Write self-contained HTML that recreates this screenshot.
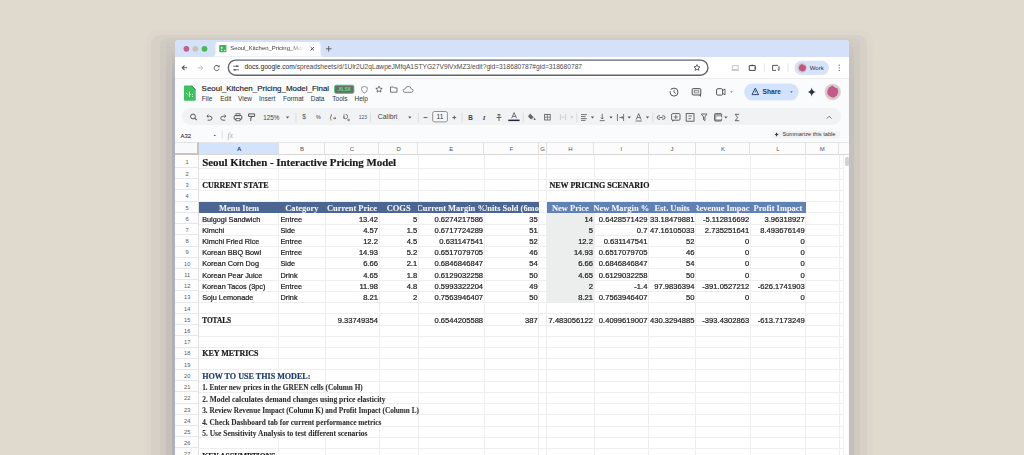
<!DOCTYPE html><html><head><meta charset="utf-8"><style>
*{margin:0;padding:0;box-sizing:border-box}
html,body{width:1024px;height:455px;overflow:hidden;background:#e0d9ce;font-family:"Liberation Sans",sans-serif}
.a{position:absolute}
.t{position:absolute;white-space:nowrap;line-height:1}
.win{position:absolute;left:174.5px;top:40px;width:674.5px;height:430px;background:#f9fbfd;border-radius:4px 4px 0 0;;overflow:hidden}
.c{position:absolute;overflow:hidden;white-space:nowrap;line-height:1}
svg.ov{position:absolute;left:0;top:0}
</style></head><body>
<div class="a" style="left:146px;top:28.6px;width:727.3px;height:440px;background:#dcd6cc;border-radius:14px;-webkit-mask-image:linear-gradient(180deg,rgba(0,0,0,.6) 0,#000 30px)"></div>
<div class="a" style="left:150.6px;top:34.5px;width:716.1px;height:440px;background:#d6d0c7;border-radius:9px"></div>
<div class="a" style="left:159.8px;top:38.3px;width:699.9px;height:440px;background:#cfcac1;border-radius:6px;-webkit-mask-image:linear-gradient(180deg,rgba(0,0,0,.55) 0,rgba(0,0,0,.8) 10px,#000 30px)"></div>
<div class="a" style="left:166.4px;top:40px;width:687.6px;height:440px;background:#c5c0b9;border-radius:4px;-webkit-mask-image:linear-gradient(180deg,rgba(0,0,0,0) 0,rgba(0,0,0,.5) 12px,#000 40px)"></div>
<div class="a" style="left:171.7px;top:52px;width:3px;height:410px;background:#adb1bc;-webkit-mask-image:linear-gradient(180deg,rgba(0,0,0,0) 0,#000 30px)"></div>
<div class="win" style="filter:blur(0.3px)"><div class="a" style="left:0.00px;top:0.00px;width:674.00px;height:16.50px;background:#d5e1f8"></div><svg class="ov" width="1024" height="455" viewBox="0 0 1024 455" style="left:-174.5px;top:-40px"><circle cx="186.4" cy="48.8" r="2.9" fill="#c4608c"/><circle cx="195.4" cy="48.8" r="2.9" fill="#c9c3bd"/><circle cx="204.5" cy="48.8" r="2.9" fill="#47bb58"/><path d="M212.5 56.6 Q215.5 56.6 215.5 53.6 L215.5 45 Q215.5 42 218.5 42 L317.5 42 Q320.5 42 320.5 45 L320.5 53.6 Q320.5 56.6 323.5 56.6 Z" fill="#fff"/><rect x="219.2" y="45" width="7.2" height="7.3" rx="0.8" fill="#3cb55a"/><rect x="221" y="47" width="1.6" height="1.6" fill="#e9f5ec"/><rect x="221" y="49.8" width="1.3" height="1.3" fill="#cfe9d5"/><rect x="224" y="49.8" width="1.3" height="1.3" fill="#cfe9d5"/></svg><div class="t" style="left:55.70px;top:6.10px;font-size:5.95px;color:#3a3a3a;width:74px;overflow:hidden;-webkit-mask-image:linear-gradient(90deg,#000 82%,transparent)">Seoul_Kitchen_Pricing_Model_Final</div><svg class="ov" width="1024" height="455" viewBox="0 0 1024 455" style="left:-174.5px;top:-40px"><path d="M310.6 47 L314 50.4 M314 47 L310.6 50.4" stroke="#555" stroke-width="1"/><path d="M328.7 46 V51.6 M325.9 48.8 H331.5" stroke="#555" stroke-width="0.9"/></svg><div class="a" style="left:0.00px;top:16.50px;width:674.00px;height:22.00px;background:#fff"></div><svg class="ov" width="1024" height="455" viewBox="0 0 1024 455" style="left:-174.5px;top:-40px"><path d="M187.2 67.8 H182.2 M184.5 65.5 L182.2 67.8 L184.5 70.1" stroke="#5a5a5a" stroke-width="1.1" fill="none"/><path d="M197.8 67.8 H202.8 M200.5 65.5 L202.8 67.8 L200.5 70.1" stroke="#c0c0c0" stroke-width="1.0" fill="none"/><path d="M218.9 66.6 A2.6 2.6 0 1 0 219.2 68.9" stroke="#5a5a5a" stroke-width="1.0" fill="none"/><path d="M219.6 64.9 V67.3 H217.2 Z" fill="#5a5a5a"/><rect x="228.25" y="60.05" width="479.7" height="15.2" rx="7.6" fill="#fff" stroke="#5f646c" stroke-width="1.35"/><path d="M233 66.2 H239 M233 69.8 H239" stroke="#555" stroke-width="0.8"/><circle cx="236.9" cy="66.2" r="0.9" fill="#555"/><circle cx="234.9" cy="69.8" r="0.9" fill="#555"/></svg><div class="t" style="left:70.10px;top:24.40px;font-size:6.65px;color:#4a4a4a"><span style='color:#262626'>docs.google.com</span>/spreadsheets/d/1Ulr2U2qLawpeJMfqA1STYG27V9lVxMZ3/edit?gid=318680787#gid=318680787</div><svg class="ov" width="1024" height="455" viewBox="0 0 1024 455" style="left:-174.5px;top:-40px"><path d="M697 64.6 L697.9 66.6 L700 66.8 L698.4 68.2 L698.9 70.4 L697 69.2 L695.1 70.4 L695.6 68.2 L694 66.8 L696.1 66.6 Z" fill="none" stroke="#444" stroke-width="0.8" stroke-linejoin="round"/><path d="M732.4 65.6 H738.2 V69.6 H732.4 Z M731.4 70.4 H739.2" fill="none" stroke="#b8b8b8" stroke-width="0.8"/><path d="M749.3 65.6 H755.2 V70.4 H749.3 Z" fill="none" stroke="#444" stroke-width="1"/><circle cx="752.2" cy="65.3" r="0.8" fill="#444"/><circle cx="755.4" cy="68" r="0.8" fill="#444"/><path d="M764.2 63.2 V72.2 M788 63.2 V72.2" stroke="#dcdcdc" stroke-width="0.7"/><path d="M772.6 65.4 H778 M772.6 65.4 V70.4 H776 M779 66.2 V70.4 L777.8 69.4" fill="none" stroke="#444" stroke-width="0.9"/><rect x="794.4" y="60.7" width="34.6" height="14.3" rx="7.15" fill="#d6e3f8"/><circle cx="802.2" cy="67.85" r="4.7" fill="#cfc4ba"/><path d="M802 64 L803.4 65 L805.6 66 L806 68 L805.2 70.2 L803 71.6 L801 71 L799.2 69.6 L798.8 67.4 L800 65.2 Z" fill="#c05585"/></svg><div class="t" style="left:635.30px;top:24.50px;font-size:6px;color:#333">Work</div><svg class="ov" width="1024" height="455" viewBox="0 0 1024 455" style="left:-174.5px;top:-40px"><circle cx="839.2" cy="65.2" r="0.65" fill="#555"/><circle cx="839.2" cy="67.8" r="0.65" fill="#555"/><circle cx="839.2" cy="70.4" r="0.65" fill="#555"/></svg><div class="a" style="left:0.00px;top:38.00px;width:674.00px;height:0.60px;background:#ececec"></div><svg class="ov" width="1024" height="455" viewBox="0 0 1024 455" style="left:-174.5px;top:-40px"><path d="M184 86.4 Q184 85.6 184.8 85.6 L191.8 85.6 L195.7 89.5 L195.7 100 Q195.7 100.8 194.9 100.8 L184.8 100.8 Q184 100.8 184 100 Z" fill="#3fbf5e"/><path d="M191.6 85.8 L195.5 89.7" stroke="#2e6b55" stroke-width="0.8"/><path d="M186.2 93.2 L187.6 94.6 M189.4 91.6 V97 M189.6 94.4 H190.8" stroke="#eaf7ee" stroke-width="0.8" fill="none"/><circle cx="192.6" cy="94.2" r="0.55" fill="#eaf7ee"/><circle cx="192.6" cy="96.4" r="0.55" fill="#eaf7ee"/></svg><div class="t" style="left:27.10px;top:44.70px;font-size:7.95px;color:#1a1a1a;-webkit-text-stroke:0.15px #1a1a1a">Seoul_Kitchen_Pricing_Model_Final</div><svg class="ov" width="1024" height="455" viewBox="0 0 1024 455" style="left:-174.5px;top:-40px"><rect x="334.6" y="85.2" width="19.3" height="8.1" rx="1.5" fill="#6b6b6b" stroke="#49c268" stroke-width="0.9"/></svg><div class="t" style="left:162.80px;top:46.60px;font-size:5px;color:#5ee07e;font-weight:bold;letter-spacing:-0.2px">.XLSX</div><svg class="ov" width="1024" height="455" viewBox="0 0 1024 455" style="left:-174.5px;top:-40px"><path d="M364.4 86.4 L367.2 87.4 V89.6 Q367.2 92 364.4 93 Q361.6 92 361.6 89.6 V87.4 Z" fill="none" stroke="#777" stroke-width="0.8"/><path d="M379 86.1 L380 88.2 L382.2 88.4 L380.5 89.9 L381 92.1 L379 90.9 L377 92.1 L377.5 89.9 L375.8 88.4 L378 88.2 Z" fill="none" stroke="#555" stroke-width="0.8" stroke-linejoin="round"/><path d="M390.5 87 H393.5 L394.4 87.9 H397 V92.2 H390.5 Z" fill="none" stroke="#555" stroke-width="0.8"/><path d="M404.5 92.3 H411.5 Q413 92.3 413 90.6 Q413 89 411.3 88.9 Q410.7 86.4 408.2 86.4 Q405.8 86.4 405.2 88.8 Q403.3 89 403.3 90.6 Q403.3 92.3 404.5 92.3 Z" fill="none" stroke="#666" stroke-width="0.8"/></svg><div class="t" style="left:27.30px;top:56.10px;font-size:6.5px;color:#333">File</div><div class="t" style="left:45.70px;top:56.10px;font-size:6.5px;color:#333">Edit</div><div class="t" style="left:63.50px;top:56.10px;font-size:6.5px;color:#333">View</div><div class="t" style="left:84.50px;top:56.10px;font-size:6.5px;color:#333">Insert</div><div class="t" style="left:108.50px;top:56.10px;font-size:6.5px;color:#333">Format</div><div class="t" style="left:136.20px;top:56.10px;font-size:6.5px;color:#333">Data</div><div class="t" style="left:157.80px;top:56.10px;font-size:6.5px;color:#333">Tools</div><div class="t" style="left:180.00px;top:56.10px;font-size:6.5px;color:#333">Help</div><svg class="ov" width="1024" height="455" viewBox="0 0 1024 455" style="left:-174.5px;top:-40px"><circle cx="674" cy="92.1" r="4" fill="none" stroke="#555" stroke-width="1"/><path d="M674 89.8 V92.3 L675.8 93.5" fill="none" stroke="#555" stroke-width="0.9"/><path d="M669.4 89.2 L670.2 91.6 L672 90" fill="#fff" stroke="none"/><rect x="692.2" y="88.6" width="8.6" height="6.4" rx="1" fill="#e4e4e4" stroke="#555" stroke-width="1"/><path d="M699 95 L701 97 V94" fill="#555"/><rect x="694.6" y="90.6" width="3.8" height="2.2" fill="none" stroke="#777" stroke-width="0.6"/><rect x="716.6" y="88.7" width="6" height="6.4" rx="1.2" fill="none" stroke="#555" stroke-width="1"/><path d="M722.6 90.5 L725 89 V94.8 L722.6 93.3" fill="none" stroke="#555" stroke-width="0.9"/><path d="M730.2 91.4 H732.8 L731.5 92.8 Z" fill="#555"/><rect x="744.1" y="83.4" width="54.6" height="17.2" rx="8.6" fill="#d3e3fd"/><path d="M755.3 88.1 L758.6 94.6 H752 Z" fill="none" stroke="#324a72" stroke-width="1"/><path d="M755.3 90.4 V92.6" stroke="#324a72" stroke-width="0.8"/></svg><div class="t" style="left:588.10px;top:48.70px;font-size:6.6px;color:#23395e;font-weight:bold">Share</div><svg class="ov" width="1024" height="455" viewBox="0 0 1024 455" style="left:-174.5px;top:-40px"><path d="M790.2 91.4 H792.8 L791.5 92.8 Z" fill="#333"/><path d="M811.7 87.6 Q812.3 91.4 815.8 92.1 Q812.3 92.8 811.7 96.6 Q811.1 92.8 807.6 92.1 Q811.1 91.4 811.7 87.6 Z" fill="#2a3246"/><circle cx="832.7" cy="92.1" r="8.1" fill="#d6cdc4"/><path d="M832.4 85.6 L834.6 87.2 L837.6 88.6 L838.2 92 L837 95.6 L833.6 97.8 L830.4 96.8 L827.6 94.6 L827.2 91 L829 87.6 Z" fill="#c25a8b"/></svg><div class="a" style="left:7.10px;top:68.00px;width:659.40px;height:17.20px;background:#f0f2f3;border-radius:8.6px"></div><svg class="ov" width="1024" height="455" viewBox="0 0 1024 455" style="left:-174.5px;top:-40px"><circle cx="193" cy="116.5" r="2.4" fill="none" stroke="#555" stroke-width="1"/><path d="M194.7 118.2 L196.8 120.2" stroke="#555" stroke-width="1.1"/><path d="M207 116.2 H209.8 Q212 116.2 212 118.2 Q212 120.2 209.8 120.2 H207.6 M208.4 114.8 L206.9 116.2 L208.4 117.6" fill="none" stroke="#555" stroke-width="0.9"/><path d="M225.8 116.2 H223 Q220.8 116.2 220.8 118.2 Q220.8 120.2 223 120.2 H225.2 M224.4 114.8 L225.9 116.2 L224.4 117.6" fill="none" stroke="#555" stroke-width="0.9"/><rect x="234.2" y="115.6" width="7.6" height="3.8" rx="0.8" fill="none" stroke="#555" stroke-width="1"/><rect x="236" y="113.7" width="4" height="2" fill="none" stroke="#555" stroke-width="0.8"/><rect x="236" y="118.4" width="4" height="2.4" fill="#fff" stroke="#555" stroke-width="0.8"/><path d="M248.6 113.9 H254.6 V116.4 H248.6 Z M251.6 116.4 V117.6 H250.8 V121" fill="none" stroke="#555" stroke-width="1"/></svg><div class="t" style="left:88.70px;top:74.60px;font-size:6.3px;color:#444">125%</div><svg class="ov" width="1024" height="455" viewBox="0 0 1024 455" style="left:-174.5px;top:-40px"><path d="M285.90000000000003 116.6 H289.3 L287.6 118.4 Z" fill="#555"/><path d="M296 112.8 V122.2" stroke="#d4d6da" stroke-width="0.7"/></svg><div class="t" style="left:127.70px;top:74.40px;font-size:6.6px;color:#555">$</div><div class="t" style="left:141.60px;top:75.10px;font-size:5.4px;color:#444">%</div><svg class="ov" width="1024" height="455" viewBox="0 0 1024 455" style="left:-174.5px;top:-40px"><path d="M331.6 114.3 L330.2 118.8 M333.2 118.2 H335.8 M334.6 117.2 L335.8 118.2 L334.6 119.2" fill="none" stroke="#555" stroke-width="0.8"/><circle cx="331" cy="119.8" r="0.6" fill="#555"/><path d="M344 114.3 V118.8 M345.6 114.3 Q347.6 114.3 347.6 116.5 Q347.6 118.8 345.6 118.8 Q343.6 118.8 343.6 116.5 M347 120 H349.6 M348.4 119 L349.6 120 L348.4 121" fill="none" stroke="#555" stroke-width="0.7"/></svg><div class="t" style="left:184.30px;top:75.40px;font-size:5px;color:#555">123</div><svg class="ov" width="1024" height="455" viewBox="0 0 1024 455" style="left:-174.5px;top:-40px"><path d="M370.4 112.8 V122.2" stroke="#d4d6da" stroke-width="0.7"/></svg><div class="t" style="left:203.30px;top:74.20px;font-size:6.9px;color:#444">Calibri</div><svg class="ov" width="1024" height="455" viewBox="0 0 1024 455" style="left:-174.5px;top:-40px"><path d="M408.1 116.6 H411.5 L409.8 118.4 Z" fill="#555"/><path d="M418.4 112.8 V122.2" stroke="#d4d6da" stroke-width="0.7"/><path d="M423.6 117.5 H427.4" stroke="#555" stroke-width="0.9"/><rect x="432.7" y="111.5" width="14.7" height="10.4" rx="1.8" fill="#f6f7f9" stroke="#777" stroke-width="0.8"/></svg><div class="t" style="left:265.50px;top:73.90px;transform:translateX(-50%);font-size:6.6px;color:#333">11</div><svg class="ov" width="1024" height="455" viewBox="0 0 1024 455" style="left:-174.5px;top:-40px"><path d="M452.4 117.5 H456.2 M454.3 115.6 V119.4" stroke="#555" stroke-width="0.9"/><path d="M462 112.8 V122.2" stroke="#d4d6da" stroke-width="0.7"/></svg><div class="t" style="left:293.80px;top:74.60px;font-size:6.4px;color:#444;font-weight:bold">B</div><div class="t" style="left:308.20px;top:74.60px;font-family:'Liberation Serif',serif;font-size:7px;color:#444;font-weight:bold"><i>I</i></div><svg class="ov" width="1024" height="455" viewBox="0 0 1024 455" style="left:-174.5px;top:-40px"><path d="M499 114 V121 M496.6 117.5 H501.4 M497.2 115 Q499 113.6 500.6 115" fill="none" stroke="#555" stroke-width="0.9"/><path d="M511.7 118.2 L514.1 112.6 L516.5 118.2 M512.6 116.4 H515.6" fill="none" stroke="#555" stroke-width="0.8"/><rect x="508.3" y="119.6" width="11.3" height="1.5" fill="#1e2a3c"/><path d="M523.3 112.8 V122.2" stroke="#d4d6da" stroke-width="0.7"/><path d="M530 113.4 L533.8 117.2 L531.2 119.4 L528 116.4 Z" fill="#666"/><circle cx="534.6" cy="119.2" r="0.9" fill="#555"/><rect x="544.6" y="114.4" width="5.6" height="5.6" fill="none" stroke="#666" stroke-width="0.9"/><path d="M547.4 114.4 V120 M544.6 117.2 H550.2" stroke="#666" stroke-width="0.7"/><path d="M560.4 114.4 V120 M565.6 114.4 V120 M561.8 117.2 H564.4" fill="none" stroke="#c8c8c8" stroke-width="0.9"/><path d="M570.0999999999999 116.6 H573.5 L571.8 118.4 Z" fill="#c5c5c5"/><path d="M576.7 112.8 V122.2" stroke="#d4d6da" stroke-width="0.7"/><path d="M581 114.6 H586.8 M581 116.6 H585.6 M581 118.6 H586.8 M581 120.4 H585.6" stroke="#555" stroke-width="0.8"/><path d="M590.8 116.6 H594.2 L592.5 118.4 Z" fill="#555"/><path d="M599.8 120.6 H604.6 M602.2 113.8 V119 M600.8 117.6 L602.2 119 L603.6 117.6" fill="none" stroke="#555" stroke-width="0.8"/><path d="M609.3 116.6 H612.7 L611 118.4 Z" fill="#555"/><path d="M617.4 114 V121 M619.4 117.5 H623 M621.8 116.2 L623 117.5 L621.8 118.8 M623.6 114 V121" fill="none" stroke="#555" stroke-width="0.8"/><path d="M627.5 116.6 H630.9000000000001 L629.2 118.4 Z" fill="#555"/><path d="M636.2 119.6 L638.7 113.6 L641.2 119.6 M637.1 117.6 H640.3 M635.6 121 H641.8" fill="none" stroke="#555" stroke-width="0.8"/><path d="M645.8 116.6 H649.2 L647.5 118.4 Z" fill="#555"/><path d="M652.8 112.8 V122.2" stroke="#d4d6da" stroke-width="0.7"/><path d="M660 115.8 H658.8 Q657.2 115.8 657.2 117.5 Q657.2 119.2 658.8 119.2 H660 M662.2 115.8 H663.4 Q665 115.8 665 117.5 Q665 119.2 663.4 119.2 H662.2 M659.4 117.5 H662.8" fill="none" stroke="#555" stroke-width="0.9"/><rect x="671.6" y="113.6" width="8.4" height="6.6" rx="1" fill="none" stroke="#555" stroke-width="0.9"/><path d="M675.8 115 V119 M673.8 117 H677.8" stroke="#555" stroke-width="0.8"/><path d="M672.4 120 L672.4 121.8 L674.4 120" fill="#555"/><rect x="686.2" y="113.6" width="7.8" height="7.6" fill="none" stroke="#555" stroke-width="0.9"/><path d="M688.4 116 H692 M688.4 118.6 H691" stroke="#555" stroke-width="0.8"/><path d="M701.4 114 H707 L704.9 117 V120.6 L703.5 119.6 V117 Z" fill="none" stroke="#555" stroke-width="0.9"/><rect x="714.6" y="113.6" width="7" height="7.4" rx="0.8" fill="#aaa" stroke="#555" stroke-width="0.9"/><rect x="716.4" y="116.6" width="5.2" height="2.6" fill="#fff"/><path d="M724.1999999999999 116.6 H727.6 L725.9 118.4 Z" fill="#555"/><path d="M739.2 114.3 H735.2 L737.6 117.5 L735.2 120.7 H739.2" fill="none" stroke="#555" stroke-width="0.9"/><path d="M826.8 118.6 L829.2 116.2 L831.6 118.6" fill="none" stroke="#666" stroke-width="0.9"/></svg><div class="t" style="left:6.10px;top:93.60px;font-size:5.9px;color:#333;-webkit-text-stroke:0.1px #333">A32</div><svg class="ov" width="1024" height="455" viewBox="0 0 1024 455" style="left:-174.5px;top:-40px"><path d="M213.5 134.9 H216.1 L214.8 136.3 Z" fill="#555"/><path d="M222.3 130.2 V139" stroke="#dadce0" stroke-width="0.7"/></svg><div class="t" style="left:53.10px;top:92.20px;font-family:'Liberation Serif',serif;font-size:7.4px;color:#a8a8a8"><i>fx</i></div><svg class="ov" width="1024" height="455" viewBox="0 0 1024 455" style="left:-174.5px;top:-40px"><rect x="771.4" y="130.4" width="68.6" height="8.2" rx="4" fill="#f1f3f6"/><path d="M776.6 132.2 Q776.9 134.2 778.6 134.5 Q776.9 134.8 776.6 136.8 Q776.3 134.8 774.6 134.5 Q776.3 134.2 776.6 132.2 Z" fill="#333"/></svg><div class="t" style="left:607.90px;top:92.30px;font-size:5.7px;color:#333">Summarize this table</div><div class="a" style="left:0.50px;top:101.60px;width:24.40px;height:13.20px;background:#f8f9fa;border-top:1px solid #e3e3e3;border-right:2px solid #c9c5be;border-bottom:2.2px solid #c9c5be"></div><div class="a" style="left:24.90px;top:101.60px;width:79.40px;height:13.20px;background:#d3e3fd;border-top:1px solid #e6e6e6;border-right:1px solid #e0e0e0;border-bottom:1px solid #d8d8d8"></div><div class="t" style="left:64.60px;top:106.20px;transform:translateX(-50%);font-size:6px;color:#1f3a6b;font-weight:bold">A</div><div class="a" style="left:104.30px;top:101.60px;width:46.20px;height:13.20px;background:#fcfcfd;border-top:1px solid #e6e6e6;border-right:1px solid #e0e0e0;border-bottom:1px solid #d8d8d8"></div><div class="t" style="left:127.40px;top:106.20px;transform:translateX(-50%);font-size:6px;color:#555">B</div><div class="a" style="left:150.50px;top:101.60px;width:54.00px;height:13.20px;background:#fcfcfd;border-top:1px solid #e6e6e6;border-right:1px solid #e0e0e0;border-bottom:1px solid #d8d8d8"></div><div class="t" style="left:177.50px;top:106.20px;transform:translateX(-50%);font-size:6px;color:#555">C</div><div class="a" style="left:204.50px;top:101.60px;width:39.30px;height:13.20px;background:#fcfcfd;border-top:1px solid #e6e6e6;border-right:1px solid #e0e0e0;border-bottom:1px solid #d8d8d8"></div><div class="t" style="left:224.15px;top:106.20px;transform:translateX(-50%);font-size:6px;color:#555">D</div><div class="a" style="left:243.80px;top:101.60px;width:65.90px;height:13.20px;background:#fcfcfd;border-top:1px solid #e6e6e6;border-right:1px solid #e0e0e0;border-bottom:1px solid #d8d8d8"></div><div class="t" style="left:276.75px;top:106.20px;transform:translateX(-50%);font-size:6px;color:#555">E</div><div class="a" style="left:309.70px;top:101.60px;width:54.50px;height:13.20px;background:#fcfcfd;border-top:1px solid #e6e6e6;border-right:1px solid #e0e0e0;border-bottom:1px solid #d8d8d8"></div><div class="t" style="left:336.95px;top:106.20px;transform:translateX(-50%);font-size:6px;color:#555">F</div><div class="a" style="left:364.20px;top:101.60px;width:8.00px;height:13.20px;background:#fcfcfd;border-top:1px solid #e6e6e6;border-right:1px solid #e0e0e0;border-bottom:1px solid #d8d8d8"></div><div class="t" style="left:368.20px;top:106.20px;transform:translateX(-50%);font-size:6px;color:#555">G</div><div class="a" style="left:372.20px;top:101.60px;width:47.30px;height:13.20px;background:#fcfcfd;border-top:1px solid #e6e6e6;border-right:1px solid #e0e0e0;border-bottom:1px solid #d8d8d8"></div><div class="t" style="left:395.85px;top:106.20px;transform:translateX(-50%);font-size:6px;color:#555">H</div><div class="a" style="left:419.50px;top:101.60px;width:54.50px;height:13.20px;background:#fcfcfd;border-top:1px solid #e6e6e6;border-right:1px solid #e0e0e0;border-bottom:1px solid #d8d8d8"></div><div class="t" style="left:446.75px;top:106.20px;transform:translateX(-50%);font-size:6px;color:#555">I</div><div class="a" style="left:474.00px;top:101.60px;width:47.00px;height:13.20px;background:#fcfcfd;border-top:1px solid #e6e6e6;border-right:1px solid #e0e0e0;border-bottom:1px solid #d8d8d8"></div><div class="t" style="left:497.50px;top:106.20px;transform:translateX(-50%);font-size:6px;color:#555">J</div><div class="a" style="left:521.00px;top:101.60px;width:54.80px;height:13.20px;background:#fcfcfd;border-top:1px solid #e6e6e6;border-right:1px solid #e0e0e0;border-bottom:1px solid #d8d8d8"></div><div class="t" style="left:548.40px;top:106.20px;transform:translateX(-50%);font-size:6px;color:#555">K</div><div class="a" style="left:575.80px;top:101.60px;width:55.40px;height:13.20px;background:#fcfcfd;border-top:1px solid #e6e6e6;border-right:1px solid #e0e0e0;border-bottom:1px solid #d8d8d8"></div><div class="t" style="left:603.50px;top:106.20px;transform:translateX(-50%);font-size:6px;color:#555">L</div><div class="a" style="left:631.20px;top:101.60px;width:33.30px;height:13.20px;background:#fcfcfd;border-top:1px solid #e6e6e6;border-right:1px solid #e0e0e0;border-bottom:1px solid #d8d8d8"></div><div class="t" style="left:647.85px;top:106.20px;transform:translateX(-50%);font-size:6px;color:#555">M</div><div class="a" style="left:664.50px;top:101.60px;width:21.00px;height:13.20px;background:#fcfcfd;border-top:1px solid #e6e6e6;border-right:1px solid #e0e0e0;border-bottom:1px solid #d8d8d8"></div><div class="a" style="left:0.50px;top:114.80px;width:24.40px;height:13.20px;background:#fdfdfd;border-right:1px solid #dedfe0;border-bottom:1px solid #e6e7e8"></div><div class="t" style="left:12.70px;top:119.70px;transform:translateX(-50%);font-size:5.7px;color:#5a5a5a">1</div><div class="a" style="left:0.50px;top:128.00px;width:24.40px;height:11.22px;background:#fdfdfd;border-right:1px solid #dedfe0;border-bottom:1px solid #e6e7e8"></div><div class="t" style="left:12.70px;top:131.91px;transform:translateX(-50%);font-size:5.7px;color:#5a5a5a">2</div><div class="a" style="left:0.50px;top:139.22px;width:24.40px;height:11.22px;background:#fdfdfd;border-right:1px solid #dedfe0;border-bottom:1px solid #e6e7e8"></div><div class="t" style="left:12.70px;top:143.13px;transform:translateX(-50%);font-size:5.7px;color:#5a5a5a">3</div><div class="a" style="left:0.50px;top:150.44px;width:24.40px;height:11.22px;background:#fdfdfd;border-right:1px solid #dedfe0;border-bottom:1px solid #e6e7e8"></div><div class="t" style="left:12.70px;top:154.35px;transform:translateX(-50%);font-size:5.7px;color:#5a5a5a">4</div><div class="a" style="left:0.50px;top:161.66px;width:24.40px;height:11.22px;background:#fdfdfd;border-right:1px solid #dedfe0;border-bottom:1px solid #e6e7e8"></div><div class="t" style="left:12.70px;top:165.57px;transform:translateX(-50%);font-size:5.7px;color:#5a5a5a">5</div><div class="a" style="left:0.50px;top:172.88px;width:24.40px;height:11.22px;background:#fdfdfd;border-right:1px solid #dedfe0;border-bottom:1px solid #e6e7e8"></div><div class="t" style="left:12.70px;top:176.79px;transform:translateX(-50%);font-size:5.7px;color:#5a5a5a">6</div><div class="a" style="left:0.50px;top:184.10px;width:24.40px;height:11.22px;background:#fdfdfd;border-right:1px solid #dedfe0;border-bottom:1px solid #e6e7e8"></div><div class="t" style="left:12.70px;top:188.01px;transform:translateX(-50%);font-size:5.7px;color:#5a5a5a">7</div><div class="a" style="left:0.50px;top:195.32px;width:24.40px;height:11.22px;background:#fdfdfd;border-right:1px solid #dedfe0;border-bottom:1px solid #e6e7e8"></div><div class="t" style="left:12.70px;top:199.23px;transform:translateX(-50%);font-size:5.7px;color:#5a5a5a">8</div><div class="a" style="left:0.50px;top:206.54px;width:24.40px;height:11.22px;background:#fdfdfd;border-right:1px solid #dedfe0;border-bottom:1px solid #e6e7e8"></div><div class="t" style="left:12.70px;top:210.45px;transform:translateX(-50%);font-size:5.7px;color:#5a5a5a">9</div><div class="a" style="left:0.50px;top:217.76px;width:24.40px;height:11.22px;background:#fdfdfd;border-right:1px solid #dedfe0;border-bottom:1px solid #e6e7e8"></div><div class="t" style="left:12.70px;top:221.67px;transform:translateX(-50%);font-size:5.7px;color:#5a5a5a">10</div><div class="a" style="left:0.50px;top:228.98px;width:24.40px;height:11.22px;background:#fdfdfd;border-right:1px solid #dedfe0;border-bottom:1px solid #e6e7e8"></div><div class="t" style="left:12.70px;top:232.89px;transform:translateX(-50%);font-size:5.7px;color:#5a5a5a">11</div><div class="a" style="left:0.50px;top:240.20px;width:24.40px;height:11.22px;background:#fdfdfd;border-right:1px solid #dedfe0;border-bottom:1px solid #e6e7e8"></div><div class="t" style="left:12.70px;top:244.11px;transform:translateX(-50%);font-size:5.7px;color:#5a5a5a">12</div><div class="a" style="left:0.50px;top:251.42px;width:24.40px;height:11.22px;background:#fdfdfd;border-right:1px solid #dedfe0;border-bottom:1px solid #e6e7e8"></div><div class="t" style="left:12.70px;top:255.33px;transform:translateX(-50%);font-size:5.7px;color:#5a5a5a">13</div><div class="a" style="left:0.50px;top:262.64px;width:24.40px;height:11.22px;background:#fdfdfd;border-right:1px solid #dedfe0;border-bottom:1px solid #e6e7e8"></div><div class="t" style="left:12.70px;top:266.55px;transform:translateX(-50%);font-size:5.7px;color:#5a5a5a">14</div><div class="a" style="left:0.50px;top:273.86px;width:24.40px;height:11.22px;background:#fdfdfd;border-right:1px solid #dedfe0;border-bottom:1px solid #e6e7e8"></div><div class="t" style="left:12.70px;top:277.77px;transform:translateX(-50%);font-size:5.7px;color:#5a5a5a">15</div><div class="a" style="left:0.50px;top:285.08px;width:24.40px;height:11.22px;background:#fdfdfd;border-right:1px solid #dedfe0;border-bottom:1px solid #e6e7e8"></div><div class="t" style="left:12.70px;top:288.99px;transform:translateX(-50%);font-size:5.7px;color:#5a5a5a">16</div><div class="a" style="left:0.50px;top:296.30px;width:24.40px;height:11.22px;background:#fdfdfd;border-right:1px solid #dedfe0;border-bottom:1px solid #e6e7e8"></div><div class="t" style="left:12.70px;top:300.21px;transform:translateX(-50%);font-size:5.7px;color:#5a5a5a">17</div><div class="a" style="left:0.50px;top:307.52px;width:24.40px;height:11.22px;background:#fdfdfd;border-right:1px solid #dedfe0;border-bottom:1px solid #e6e7e8"></div><div class="t" style="left:12.70px;top:311.43px;transform:translateX(-50%);font-size:5.7px;color:#5a5a5a">18</div><div class="a" style="left:0.50px;top:318.74px;width:24.40px;height:11.22px;background:#fdfdfd;border-right:1px solid #dedfe0;border-bottom:1px solid #e6e7e8"></div><div class="t" style="left:12.70px;top:322.65px;transform:translateX(-50%);font-size:5.7px;color:#5a5a5a">19</div><div class="a" style="left:0.50px;top:329.96px;width:24.40px;height:11.22px;background:#fdfdfd;border-right:1px solid #dedfe0;border-bottom:1px solid #e6e7e8"></div><div class="t" style="left:12.70px;top:333.87px;transform:translateX(-50%);font-size:5.7px;color:#5a5a5a">20</div><div class="a" style="left:0.50px;top:341.18px;width:24.40px;height:11.22px;background:#fdfdfd;border-right:1px solid #dedfe0;border-bottom:1px solid #e6e7e8"></div><div class="t" style="left:12.70px;top:345.09px;transform:translateX(-50%);font-size:5.7px;color:#5a5a5a">21</div><div class="a" style="left:0.50px;top:352.40px;width:24.40px;height:11.22px;background:#fdfdfd;border-right:1px solid #dedfe0;border-bottom:1px solid #e6e7e8"></div><div class="t" style="left:12.70px;top:356.31px;transform:translateX(-50%);font-size:5.7px;color:#5a5a5a">22</div><div class="a" style="left:0.50px;top:363.62px;width:24.40px;height:11.22px;background:#fdfdfd;border-right:1px solid #dedfe0;border-bottom:1px solid #e6e7e8"></div><div class="t" style="left:12.70px;top:367.53px;transform:translateX(-50%);font-size:5.7px;color:#5a5a5a">23</div><div class="a" style="left:0.50px;top:374.84px;width:24.40px;height:11.22px;background:#fdfdfd;border-right:1px solid #dedfe0;border-bottom:1px solid #e6e7e8"></div><div class="t" style="left:12.70px;top:378.75px;transform:translateX(-50%);font-size:5.7px;color:#5a5a5a">24</div><div class="a" style="left:0.50px;top:386.06px;width:24.40px;height:11.22px;background:#fdfdfd;border-right:1px solid #dedfe0;border-bottom:1px solid #e6e7e8"></div><div class="t" style="left:12.70px;top:389.97px;transform:translateX(-50%);font-size:5.7px;color:#5a5a5a">25</div><div class="a" style="left:0.50px;top:397.28px;width:24.40px;height:11.22px;background:#fdfdfd;border-right:1px solid #dedfe0;border-bottom:1px solid #e6e7e8"></div><div class="t" style="left:12.70px;top:401.19px;transform:translateX(-50%);font-size:5.7px;color:#5a5a5a">26</div><div class="a" style="left:0.50px;top:408.50px;width:24.40px;height:11.22px;background:#fdfdfd;border-right:1px solid #dedfe0;border-bottom:1px solid #e6e7e8"></div><div class="t" style="left:12.70px;top:412.41px;transform:translateX(-50%);font-size:5.7px;color:#5a5a5a">27</div><div class="a" style="left:24.90px;top:114.80px;width:649.10px;height:315.20px;background:#fff"></div><div class="a" style="left:24.90px;top:127.50px;width:644.60px;height:1.00px;background:#edeeef"></div><div class="a" style="left:24.90px;top:138.72px;width:644.60px;height:1.00px;background:#edeeef"></div><div class="a" style="left:24.90px;top:149.94px;width:644.60px;height:1.00px;background:#edeeef"></div><div class="a" style="left:24.90px;top:161.16px;width:644.60px;height:1.00px;background:#edeeef"></div><div class="a" style="left:24.90px;top:172.38px;width:644.60px;height:1.00px;background:#edeeef"></div><div class="a" style="left:24.90px;top:183.60px;width:644.60px;height:1.00px;background:#edeeef"></div><div class="a" style="left:24.90px;top:194.82px;width:644.60px;height:1.00px;background:#edeeef"></div><div class="a" style="left:24.90px;top:206.04px;width:644.60px;height:1.00px;background:#edeeef"></div><div class="a" style="left:24.90px;top:217.26px;width:644.60px;height:1.00px;background:#edeeef"></div><div class="a" style="left:24.90px;top:228.48px;width:644.60px;height:1.00px;background:#edeeef"></div><div class="a" style="left:24.90px;top:239.70px;width:644.60px;height:1.00px;background:#edeeef"></div><div class="a" style="left:24.90px;top:250.92px;width:644.60px;height:1.00px;background:#edeeef"></div><div class="a" style="left:24.90px;top:262.14px;width:644.60px;height:1.00px;background:#edeeef"></div><div class="a" style="left:24.90px;top:273.36px;width:644.60px;height:1.00px;background:#edeeef"></div><div class="a" style="left:24.90px;top:284.58px;width:644.60px;height:1.00px;background:#edeeef"></div><div class="a" style="left:24.90px;top:295.80px;width:644.60px;height:1.00px;background:#edeeef"></div><div class="a" style="left:24.90px;top:307.02px;width:644.60px;height:1.00px;background:#edeeef"></div><div class="a" style="left:24.90px;top:318.24px;width:644.60px;height:1.00px;background:#edeeef"></div><div class="a" style="left:24.90px;top:329.46px;width:644.60px;height:1.00px;background:#edeeef"></div><div class="a" style="left:24.90px;top:340.68px;width:644.60px;height:1.00px;background:#edeeef"></div><div class="a" style="left:24.90px;top:351.90px;width:644.60px;height:1.00px;background:#edeeef"></div><div class="a" style="left:24.90px;top:363.12px;width:644.60px;height:1.00px;background:#edeeef"></div><div class="a" style="left:24.90px;top:374.34px;width:644.60px;height:1.00px;background:#edeeef"></div><div class="a" style="left:24.90px;top:385.56px;width:644.60px;height:1.00px;background:#edeeef"></div><div class="a" style="left:24.90px;top:396.78px;width:644.60px;height:1.00px;background:#edeeef"></div><div class="a" style="left:24.90px;top:408.00px;width:644.60px;height:1.00px;background:#edeeef"></div><div class="a" style="left:24.90px;top:419.22px;width:644.60px;height:1.00px;background:#edeeef"></div><div class="a" style="left:24.90px;top:430.44px;width:644.60px;height:1.00px;background:#edeeef"></div><div class="a" style="left:103.80px;top:114.80px;width:1.00px;height:315.20px;background:#edeeef"></div><div class="a" style="left:150.00px;top:114.80px;width:1.00px;height:315.20px;background:#edeeef"></div><div class="a" style="left:204.00px;top:114.80px;width:1.00px;height:315.20px;background:#edeeef"></div><div class="a" style="left:243.30px;top:114.80px;width:1.00px;height:315.20px;background:#edeeef"></div><div class="a" style="left:309.20px;top:114.80px;width:1.00px;height:315.20px;background:#edeeef"></div><div class="a" style="left:363.70px;top:114.80px;width:1.00px;height:315.20px;background:#edeeef"></div><div class="a" style="left:371.70px;top:114.80px;width:1.00px;height:315.20px;background:#edeeef"></div><div class="a" style="left:419.00px;top:114.80px;width:1.00px;height:315.20px;background:#edeeef"></div><div class="a" style="left:473.50px;top:114.80px;width:1.00px;height:315.20px;background:#edeeef"></div><div class="a" style="left:520.50px;top:114.80px;width:1.00px;height:315.20px;background:#edeeef"></div><div class="a" style="left:575.30px;top:114.80px;width:1.00px;height:315.20px;background:#edeeef"></div><div class="a" style="left:630.70px;top:114.80px;width:1.00px;height:315.20px;background:#edeeef"></div><div class="a" style="left:664.00px;top:114.80px;width:1.00px;height:315.20px;background:#edeeef"></div><div class="a" style="left:685.00px;top:114.80px;width:1.00px;height:315.20px;background:#edeeef"></div><div class="a" style="left:668.70px;top:114.80px;width:0.70px;height:315.20px;background:#f0f1f2"></div><div class="a" style="left:670.80px;top:116.80px;width:3.30px;height:9.60px;background:#d0d5dd;border-radius:1.5px"></div><div class="t" style="left:27.70px;top:117.20px;font-family:'Liberation Serif',serif;font-weight:bold;-webkit-text-stroke:0.2px currentColor;font-size:10.9px;color:#1a1a1a">Seoul Kitchen - Interactive Pricing Model</div><div class="t" style="left:27.70px;top:142.33px;font-family:'Liberation Serif',serif;font-weight:bold;-webkit-text-stroke:0.2px currentColor;font-size:8px;color:#1a1a1a">CURRENT STATE</div><div class="t" style="left:375.00px;top:142.33px;font-family:'Liberation Serif',serif;font-weight:bold;-webkit-text-stroke:0.2px currentColor;font-size:8px;color:#1a1a1a">NEW PRICING SCENARIO</div><div class="a" style="left:24.90px;top:161.66px;width:339.30px;height:11.22px;background:#4b6691"></div><div class="a" style="left:372.20px;top:161.66px;width:259.00px;height:11.22px;background:#6081b3"></div><div class="c" style="left:24.90px;top:161.66px;width:79.40px;height:11.22px;text-align:center;font-family:'Liberation Serif',serif;font-weight:bold;-webkit-text-stroke:0.2px currentColor;font-size:8.45px;color:#f4f6fa;-webkit-text-stroke:0.05px #fff;line-height:12.62px"><span style="display:inline-block;margin:0 -20px">Menu Item</span></div><div class="c" style="left:104.30px;top:161.66px;width:46.20px;height:11.22px;text-align:center;font-family:'Liberation Serif',serif;font-weight:bold;-webkit-text-stroke:0.2px currentColor;font-size:8.45px;color:#f4f6fa;-webkit-text-stroke:0.05px #fff;line-height:12.62px"><span style="display:inline-block;margin:0 -20px">Category</span></div><div class="c" style="left:150.50px;top:161.66px;width:54.00px;height:11.22px;text-align:center;font-family:'Liberation Serif',serif;font-weight:bold;-webkit-text-stroke:0.2px currentColor;font-size:8.45px;color:#f4f6fa;-webkit-text-stroke:0.05px #fff;line-height:12.62px"><span style="display:inline-block;margin:0 -20px">Current Price</span></div><div class="c" style="left:204.50px;top:161.66px;width:39.30px;height:11.22px;text-align:center;font-family:'Liberation Serif',serif;font-weight:bold;-webkit-text-stroke:0.2px currentColor;font-size:8.45px;color:#f4f6fa;-webkit-text-stroke:0.05px #fff;line-height:12.62px"><span style="display:inline-block;margin:0 -20px">COGS</span></div><div class="c" style="left:243.80px;top:161.66px;width:65.90px;height:11.22px;text-align:center;font-family:'Liberation Serif',serif;font-weight:bold;-webkit-text-stroke:0.2px currentColor;font-size:8.45px;color:#f4f6fa;-webkit-text-stroke:0.05px #fff;line-height:12.62px"><span style="display:inline-block;margin:0 -20px">Current Margin %</span></div><div class="c" style="left:309.70px;top:161.66px;width:54.50px;height:11.22px;text-align:center;font-family:'Liberation Serif',serif;font-weight:bold;-webkit-text-stroke:0.2px currentColor;font-size:8.45px;color:#f4f6fa;-webkit-text-stroke:0.05px #fff;line-height:12.62px"><span style="display:inline-block;margin:0 -20px">Units Sold (6mo)</span></div><div class="c" style="left:372.20px;top:161.66px;width:47.30px;height:11.22px;text-align:center;font-family:'Liberation Serif',serif;font-weight:bold;-webkit-text-stroke:0.2px currentColor;font-size:8.45px;color:#f4f6fa;-webkit-text-stroke:0.05px #fff;line-height:12.62px"><span style="display:inline-block;margin:0 -20px">New Price</span></div><div class="c" style="left:419.50px;top:161.66px;width:54.50px;height:11.22px;text-align:center;font-family:'Liberation Serif',serif;font-weight:bold;-webkit-text-stroke:0.2px currentColor;font-size:8.45px;color:#f4f6fa;-webkit-text-stroke:0.05px #fff;line-height:12.62px"><span style="display:inline-block;margin:0 -20px">New Margin %</span></div><div class="c" style="left:474.00px;top:161.66px;width:47.00px;height:11.22px;text-align:center;font-family:'Liberation Serif',serif;font-weight:bold;-webkit-text-stroke:0.2px currentColor;font-size:8.45px;color:#f4f6fa;-webkit-text-stroke:0.05px #fff;line-height:12.62px"><span style="display:inline-block;margin:0 -20px">Est. Units</span></div><div class="c" style="left:521.00px;top:161.66px;width:54.80px;height:11.22px;text-align:center;font-family:'Liberation Serif',serif;font-weight:bold;-webkit-text-stroke:0.2px currentColor;font-size:8.45px;color:#f4f6fa;-webkit-text-stroke:0.05px #fff;line-height:12.62px"><span style="display:inline-block;margin:0 -20px">Revenue Impact</span></div><div class="c" style="left:575.80px;top:161.66px;width:55.40px;height:11.22px;text-align:center;font-family:'Liberation Serif',serif;font-weight:bold;-webkit-text-stroke:0.2px currentColor;font-size:8.45px;color:#f4f6fa;-webkit-text-stroke:0.05px #fff;line-height:12.62px"><span style="display:inline-block;margin:0 -20px">Profit Impact</span></div><div class="a" style="left:372.20px;top:172.88px;width:47.30px;height:89.76px;background:#eceeed"></div><div class="t" style="left:27.70px;top:175.59px;font-size:7.3px;color:#222;-webkit-text-stroke:0.22px #222">Bulgogi Sandwich</div><div class="t" style="left:106.00px;top:175.59px;font-size:7.3px;color:#222;-webkit-text-stroke:0.22px #222">Entree</div><div class="t" style="right:471.10px;top:175.59px;font-size:7.6px;color:#222;-webkit-text-stroke:0.22px #222">13.42</div><div class="t" style="right:431.80px;top:175.59px;font-size:7.6px;color:#222;-webkit-text-stroke:0.22px #222">5</div><div class="t" style="right:365.90px;top:175.59px;font-size:7.6px;color:#222;-webkit-text-stroke:0.22px #222">0.6274217586</div><div class="t" style="right:311.40px;top:175.59px;font-size:7.6px;color:#222;-webkit-text-stroke:0.22px #222">35</div><div class="t" style="right:256.10px;top:175.59px;font-size:7.6px;color:#222;-webkit-text-stroke:0.22px #222">14</div><div class="t" style="right:201.60px;top:175.59px;font-size:7.6px;color:#222;-webkit-text-stroke:0.22px #222">0.6428571429</div><div class="t" style="right:154.60px;top:175.59px;font-size:7.6px;color:#222;-webkit-text-stroke:0.22px #222">33.18479881</div><div class="t" style="right:99.80px;top:175.59px;font-size:7.6px;color:#222;-webkit-text-stroke:0.22px #222">-5.112816692</div><div class="t" style="right:44.40px;top:175.59px;font-size:7.6px;color:#222;-webkit-text-stroke:0.22px #222">3.96318927</div><div class="t" style="left:27.70px;top:186.81px;font-size:7.3px;color:#222;-webkit-text-stroke:0.22px #222">Kimchi</div><div class="t" style="left:106.00px;top:186.81px;font-size:7.3px;color:#222;-webkit-text-stroke:0.22px #222">Side</div><div class="t" style="right:471.10px;top:186.81px;font-size:7.6px;color:#222;-webkit-text-stroke:0.22px #222">4.57</div><div class="t" style="right:431.80px;top:186.81px;font-size:7.6px;color:#222;-webkit-text-stroke:0.22px #222">1.5</div><div class="t" style="right:365.90px;top:186.81px;font-size:7.6px;color:#222;-webkit-text-stroke:0.22px #222">0.6717724289</div><div class="t" style="right:311.40px;top:186.81px;font-size:7.6px;color:#222;-webkit-text-stroke:0.22px #222">51</div><div class="t" style="right:256.10px;top:186.81px;font-size:7.6px;color:#222;-webkit-text-stroke:0.22px #222">5</div><div class="t" style="right:201.60px;top:186.81px;font-size:7.6px;color:#222;-webkit-text-stroke:0.22px #222">0.7</div><div class="t" style="right:154.60px;top:186.81px;font-size:7.6px;color:#222;-webkit-text-stroke:0.22px #222">47.16105033</div><div class="t" style="right:99.80px;top:186.81px;font-size:7.6px;color:#222;-webkit-text-stroke:0.22px #222">2.735251641</div><div class="t" style="right:44.40px;top:186.81px;font-size:7.6px;color:#222;-webkit-text-stroke:0.22px #222">8.493676149</div><div class="t" style="left:27.70px;top:198.03px;font-size:7.3px;color:#222;-webkit-text-stroke:0.22px #222">Kimchi Fried Rice</div><div class="t" style="left:106.00px;top:198.03px;font-size:7.3px;color:#222;-webkit-text-stroke:0.22px #222">Entree</div><div class="t" style="right:471.10px;top:198.03px;font-size:7.6px;color:#222;-webkit-text-stroke:0.22px #222">12.2</div><div class="t" style="right:431.80px;top:198.03px;font-size:7.6px;color:#222;-webkit-text-stroke:0.22px #222">4.5</div><div class="t" style="right:365.90px;top:198.03px;font-size:7.6px;color:#222;-webkit-text-stroke:0.22px #222">0.631147541</div><div class="t" style="right:311.40px;top:198.03px;font-size:7.6px;color:#222;-webkit-text-stroke:0.22px #222">52</div><div class="t" style="right:256.10px;top:198.03px;font-size:7.6px;color:#222;-webkit-text-stroke:0.22px #222">12.2</div><div class="t" style="right:201.60px;top:198.03px;font-size:7.6px;color:#222;-webkit-text-stroke:0.22px #222">0.631147541</div><div class="t" style="right:154.60px;top:198.03px;font-size:7.6px;color:#222;-webkit-text-stroke:0.22px #222">52</div><div class="t" style="right:99.80px;top:198.03px;font-size:7.6px;color:#222;-webkit-text-stroke:0.22px #222">0</div><div class="t" style="right:44.40px;top:198.03px;font-size:7.6px;color:#222;-webkit-text-stroke:0.22px #222">0</div><div class="t" style="left:27.70px;top:209.25px;font-size:7.3px;color:#222;-webkit-text-stroke:0.22px #222">Korean BBQ Bowl</div><div class="t" style="left:106.00px;top:209.25px;font-size:7.3px;color:#222;-webkit-text-stroke:0.22px #222">Entree</div><div class="t" style="right:471.10px;top:209.25px;font-size:7.6px;color:#222;-webkit-text-stroke:0.22px #222">14.93</div><div class="t" style="right:431.80px;top:209.25px;font-size:7.6px;color:#222;-webkit-text-stroke:0.22px #222">5.2</div><div class="t" style="right:365.90px;top:209.25px;font-size:7.6px;color:#222;-webkit-text-stroke:0.22px #222">0.6517079705</div><div class="t" style="right:311.40px;top:209.25px;font-size:7.6px;color:#222;-webkit-text-stroke:0.22px #222">46</div><div class="t" style="right:256.10px;top:209.25px;font-size:7.6px;color:#222;-webkit-text-stroke:0.22px #222">14.93</div><div class="t" style="right:201.60px;top:209.25px;font-size:7.6px;color:#222;-webkit-text-stroke:0.22px #222">0.6517079705</div><div class="t" style="right:154.60px;top:209.25px;font-size:7.6px;color:#222;-webkit-text-stroke:0.22px #222">46</div><div class="t" style="right:99.80px;top:209.25px;font-size:7.6px;color:#222;-webkit-text-stroke:0.22px #222">0</div><div class="t" style="right:44.40px;top:209.25px;font-size:7.6px;color:#222;-webkit-text-stroke:0.22px #222">0</div><div class="t" style="left:27.70px;top:220.47px;font-size:7.3px;color:#222;-webkit-text-stroke:0.22px #222">Korean Corn Dog</div><div class="t" style="left:106.00px;top:220.47px;font-size:7.3px;color:#222;-webkit-text-stroke:0.22px #222">Side</div><div class="t" style="right:471.10px;top:220.47px;font-size:7.6px;color:#222;-webkit-text-stroke:0.22px #222">6.66</div><div class="t" style="right:431.80px;top:220.47px;font-size:7.6px;color:#222;-webkit-text-stroke:0.22px #222">2.1</div><div class="t" style="right:365.90px;top:220.47px;font-size:7.6px;color:#222;-webkit-text-stroke:0.22px #222">0.6846846847</div><div class="t" style="right:311.40px;top:220.47px;font-size:7.6px;color:#222;-webkit-text-stroke:0.22px #222">54</div><div class="t" style="right:256.10px;top:220.47px;font-size:7.6px;color:#222;-webkit-text-stroke:0.22px #222">6.66</div><div class="t" style="right:201.60px;top:220.47px;font-size:7.6px;color:#222;-webkit-text-stroke:0.22px #222">0.6846846847</div><div class="t" style="right:154.60px;top:220.47px;font-size:7.6px;color:#222;-webkit-text-stroke:0.22px #222">54</div><div class="t" style="right:99.80px;top:220.47px;font-size:7.6px;color:#222;-webkit-text-stroke:0.22px #222">0</div><div class="t" style="right:44.40px;top:220.47px;font-size:7.6px;color:#222;-webkit-text-stroke:0.22px #222">0</div><div class="t" style="left:27.70px;top:231.69px;font-size:7.3px;color:#222;-webkit-text-stroke:0.22px #222">Korean Pear Juice</div><div class="t" style="left:106.00px;top:231.69px;font-size:7.3px;color:#222;-webkit-text-stroke:0.22px #222">Drink</div><div class="t" style="right:471.10px;top:231.69px;font-size:7.6px;color:#222;-webkit-text-stroke:0.22px #222">4.65</div><div class="t" style="right:431.80px;top:231.69px;font-size:7.6px;color:#222;-webkit-text-stroke:0.22px #222">1.8</div><div class="t" style="right:365.90px;top:231.69px;font-size:7.6px;color:#222;-webkit-text-stroke:0.22px #222">0.6129032258</div><div class="t" style="right:311.40px;top:231.69px;font-size:7.6px;color:#222;-webkit-text-stroke:0.22px #222">50</div><div class="t" style="right:256.10px;top:231.69px;font-size:7.6px;color:#222;-webkit-text-stroke:0.22px #222">4.65</div><div class="t" style="right:201.60px;top:231.69px;font-size:7.6px;color:#222;-webkit-text-stroke:0.22px #222">0.6129032258</div><div class="t" style="right:154.60px;top:231.69px;font-size:7.6px;color:#222;-webkit-text-stroke:0.22px #222">50</div><div class="t" style="right:99.80px;top:231.69px;font-size:7.6px;color:#222;-webkit-text-stroke:0.22px #222">0</div><div class="t" style="right:44.40px;top:231.69px;font-size:7.6px;color:#222;-webkit-text-stroke:0.22px #222">0</div><div class="t" style="left:27.70px;top:242.91px;font-size:7.3px;color:#222;-webkit-text-stroke:0.22px #222">Korean Tacos (3pc)</div><div class="t" style="left:106.00px;top:242.91px;font-size:7.3px;color:#222;-webkit-text-stroke:0.22px #222">Entree</div><div class="t" style="right:471.10px;top:242.91px;font-size:7.6px;color:#222;-webkit-text-stroke:0.22px #222">11.98</div><div class="t" style="right:431.80px;top:242.91px;font-size:7.6px;color:#222;-webkit-text-stroke:0.22px #222">4.8</div><div class="t" style="right:365.90px;top:242.91px;font-size:7.6px;color:#222;-webkit-text-stroke:0.22px #222">0.5993322204</div><div class="t" style="right:311.40px;top:242.91px;font-size:7.6px;color:#222;-webkit-text-stroke:0.22px #222">49</div><div class="t" style="right:256.10px;top:242.91px;font-size:7.6px;color:#222;-webkit-text-stroke:0.22px #222">2</div><div class="t" style="right:201.60px;top:242.91px;font-size:7.6px;color:#222;-webkit-text-stroke:0.22px #222">-1.4</div><div class="t" style="right:154.60px;top:242.91px;font-size:7.6px;color:#222;-webkit-text-stroke:0.22px #222">97.9836394</div><div class="t" style="right:99.80px;top:242.91px;font-size:7.6px;color:#222;-webkit-text-stroke:0.22px #222">-391.0527212</div><div class="t" style="right:44.40px;top:242.91px;font-size:7.6px;color:#222;-webkit-text-stroke:0.22px #222">-626.1741903</div><div class="t" style="left:27.70px;top:254.13px;font-size:7.3px;color:#222;-webkit-text-stroke:0.22px #222">Soju Lemonade</div><div class="t" style="left:106.00px;top:254.13px;font-size:7.3px;color:#222;-webkit-text-stroke:0.22px #222">Drink</div><div class="t" style="right:471.10px;top:254.13px;font-size:7.6px;color:#222;-webkit-text-stroke:0.22px #222">8.21</div><div class="t" style="right:431.80px;top:254.13px;font-size:7.6px;color:#222;-webkit-text-stroke:0.22px #222">2</div><div class="t" style="right:365.90px;top:254.13px;font-size:7.6px;color:#222;-webkit-text-stroke:0.22px #222">0.7563946407</div><div class="t" style="right:311.40px;top:254.13px;font-size:7.6px;color:#222;-webkit-text-stroke:0.22px #222">50</div><div class="t" style="right:256.10px;top:254.13px;font-size:7.6px;color:#222;-webkit-text-stroke:0.22px #222">8.21</div><div class="t" style="right:201.60px;top:254.13px;font-size:7.6px;color:#222;-webkit-text-stroke:0.22px #222">0.7563946407</div><div class="t" style="right:154.60px;top:254.13px;font-size:7.6px;color:#222;-webkit-text-stroke:0.22px #222">50</div><div class="t" style="right:99.80px;top:254.13px;font-size:7.6px;color:#222;-webkit-text-stroke:0.22px #222">0</div><div class="t" style="right:44.40px;top:254.13px;font-size:7.6px;color:#222;-webkit-text-stroke:0.22px #222">0</div><div class="t" style="left:27.70px;top:276.97px;font-family:'Liberation Serif',serif;font-weight:bold;-webkit-text-stroke:0.2px currentColor;font-size:7.3px;color:#1a1a1a">TOTALS</div><div class="t" style="right:471.10px;top:276.57px;font-size:7.6px;color:#222;-webkit-text-stroke:0.22px #222">9.33749354</div><div class="t" style="right:365.90px;top:276.57px;font-size:7.6px;color:#222;-webkit-text-stroke:0.22px #222">0.6544205588</div><div class="t" style="right:311.40px;top:276.57px;font-size:7.6px;color:#222;-webkit-text-stroke:0.22px #222">387</div><div class="t" style="right:256.10px;top:276.57px;font-size:7.6px;color:#222;-webkit-text-stroke:0.22px #222">7.483056122</div><div class="t" style="right:201.60px;top:276.57px;font-size:7.6px;color:#222;-webkit-text-stroke:0.22px #222">0.4099619007</div><div class="t" style="right:154.60px;top:276.57px;font-size:7.6px;color:#222;-webkit-text-stroke:0.22px #222">430.3294885</div><div class="t" style="right:99.80px;top:276.57px;font-size:7.6px;color:#222;-webkit-text-stroke:0.22px #222">-393.4302863</div><div class="t" style="right:44.40px;top:276.57px;font-size:7.6px;color:#222;-webkit-text-stroke:0.22px #222">-613.7173249</div><div class="t" style="left:27.70px;top:309.63px;font-family:'Liberation Serif',serif;font-weight:bold;-webkit-text-stroke:0.2px currentColor;font-size:8px;color:#1a1a1a">KEY METRICS</div><div class="t" style="left:27.70px;top:333.07px;font-family:'Liberation Serif',serif;font-weight:bold;-webkit-text-stroke:0.2px currentColor;font-size:8.1px;color:#23406e">HOW TO USE THIS MODEL:</div><div class="t" style="left:27.70px;top:345.29px;font-family:'Liberation Serif',serif;font-weight:bold;font-size:7.25px;color:#2e2e2e;-webkit-text-stroke:0.08px #2e2e2e">1. Enter new prices in the GREEN cells (Column H)</div><div class="t" style="left:27.70px;top:355.51px;font-family:'Liberation Serif',serif;font-weight:bold;font-size:7.50px;color:#2e2e2e;-webkit-text-stroke:0.08px #2e2e2e">2. Model calculates demand changes using price elasticity</div><div class="t" style="left:27.70px;top:367.73px;font-family:'Liberation Serif',serif;font-weight:bold;font-size:7.25px;color:#2e2e2e;-webkit-text-stroke:0.08px #2e2e2e">3. Review Revenue Impact (Column K) and Profit Impact (Column L)</div><div class="t" style="left:27.70px;top:378.63px;font-family:'Liberation Serif',serif;font-weight:bold;font-size:7.33px;color:#2e2e2e;-webkit-text-stroke:0.08px #2e2e2e">4. Check Dashboard tab for current performance metrics</div><div class="t" style="left:27.70px;top:390.17px;font-family:'Liberation Serif',serif;font-weight:bold;font-size:7.50px;color:#2e2e2e;-webkit-text-stroke:0.08px #2e2e2e">5. Use Sensitivity Analysis to test different scenarios</div><div class="t" style="left:27.70px;top:412.51px;font-family:'Liberation Serif',serif;font-weight:bold;-webkit-text-stroke:0.2px currentColor;font-size:7.7px;color:#1a1a1a">KEY ASSUMPTIONS</div></div>
</body></html>
